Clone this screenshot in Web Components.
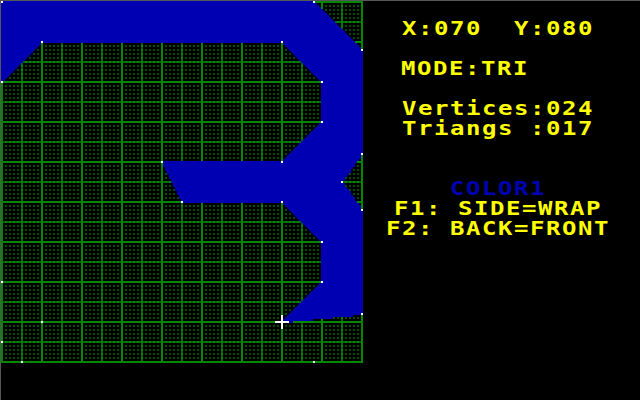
<!DOCTYPE html>
<html lang="en">
<head>
<meta charset="utf-8">
<title>Triangle editor</title>
<style>
html,body{margin:0;background:#000;overflow:hidden}
</style>
</head>
<body>
<tri-editor></tri-editor>
<script>
class TriEditor extends HTMLElement{
  constructor(){
    super();
    this.attachShadow({mode:'open'}).innerHTML=`
<style>
:host{display:grid;grid-template-columns:363px 1fr;box-sizing:border-box;width:640px;height:400px;background:#000;border-top:1px solid #555;border-left:1px solid #555;overflow:hidden}
</style>
<grid-board></grid-board>
<status-panel>
<status-line style="--cell:401">X:070&nbsp; Y:080</status-line>
<status-line></status-line>
<status-line style="--cell:400">MODE:TRI</status-line>
<status-line></status-line>
<status-line style="--cell:401">Vertices:024</status-line>
<status-line style="--cell:401">Triangs :017</status-line>
<status-line></status-line>
<status-line></status-line>
<status-line style="--cell:449;color:#0000b2">COLOR1</status-line>
<status-line style="--cell:393">F1: SIDE=WRAP</status-line>
<status-line style="--cell:385">F2: BACK=FRONT</status-line>
</status-panel>`;
  }
}
class StatusPanel extends HTMLElement{
  constructor(){
    super();
    this.attachShadow({mode:'open'}).innerHTML=`
<style>:host{display:flex;flex-direction:column;padding-top:18px;color:#ff0;min-width:0}</style><slot></slot>`;
  }
}
class StatusLine extends HTMLElement{
  constructor(){
    super();
    this.attachShadow({mode:'open'}).innerHTML=`
<style>
:host{display:block;height:20px;padding-left:calc((var(--cell,401) - 363.5)*1px);font:bold 19.2px/20px "DejaVu Sans Mono",monospace}
span{display:inline-block;white-space:pre;letter-spacing:1.241px;transform-origin:0 0;transform:scaleX(1.25)}
</style><span><slot></slot></span>`;
  }
}
class GridBoard extends HTMLElement{
  constructor(){
    super();
    const outline=[[0,0],[156,0],[180,24],[180,76],[170,90],[180,104],[180,156],[140,160],[160,140],[160,120],[140,100],[90,100],[80,80],[140,80],[160,60],[160,40],[140,20],[20,20],[0,40]];
    const loose=[[0,140],[20,160],[0,170],[10,180],[156,180]];
    const N=181, fill=new Uint8Array(N*N);
    const inside=(x,y)=>{
      let c=false;
      for(let i=0,j=outline.length-1;i<outline.length;j=i++){
        const [a,b]=outline[i],[d,e]=outline[j];
        if((b>y)!==(e>y)&&x<(d-a)*(y-b)/(e-b)+a)c=!c;
      }
      return c;
    };
    for(let y=0;y<N;y++)for(let x=0;x<N;x++)if(inside(x,y))fill[y*N+x]=1;
    outline.forEach(([a,b],i)=>{
      const [d,e]=outline[(i+1)%outline.length],n=Math.max(Math.abs(d-a),Math.abs(e-b));
      for(let k=0;k<=n;k++)fill[Math.round(b+(e-b)*k/n)*N+Math.round(a+(d-a)*k/n)]=1;
    });
    let blue='';
    for(let y=0;y<N;y++)for(let x=0;x<N;x++)if(fill[y*N+x]){
      const s=x;while(x<N&&fill[y*N+x])x++;
      blue+=`M${s} ${y}h${x-s}v1h${s-x}z`;
    }
    let dots='',minor='',major='';
    for(let y=0;y<=180;y+=2)for(let x=0;x<=180;x+=2)dots+=`M${x} ${y}h1v1h-1z`;
    for(let p=10;p<180;p+=20){minor+=`M${p} 0h1v181h-1zM0 ${p}h181v1h-181z`;}
    let bright='';
    for(let p=10;p<180;p+=20)for(let q=0;q<=180;q+=2)bright+=`M${p} ${q}h1v1h-1zM${q} ${p}h1v1h-1z`;
    for(let p=0;p<=180;p+=20){major+=`M${p} 0h1v181h-1zM0 ${p}h181v1h-181z`;}
    major+='M180 0h1v181h-1zM0 180h181v1h-181z';
    const marks=[...outline,...loose].map(([x,y])=>`M${x} ${y}h1v1h-1z`).join('');
    this.attachShadow({mode:'open'}).innerHTML=`
<style>:host{display:block;width:362px;height:362px}svg{display:block}</style>
<svg width="362" height="362" viewBox="0 0 181 181" shape-rendering="crispEdges">
<path fill="#004c00" d="${dots}"/><path fill="#006600" d="${minor}"/><path fill="#008800" d="${bright}"/><path fill="#008800" d="${major}"/>
<path fill="#0000b2" d="${blue}"/><path fill="#fff" d="${marks}M137 160h7v1h-7zM140 157h1v7h-1z"/>
</svg>`;
  }
}
customElements.define('grid-board',GridBoard);
customElements.define('status-line',StatusLine);
customElements.define('status-panel',StatusPanel);
customElements.define('tri-editor',TriEditor);
</script>
</body>
</html>
